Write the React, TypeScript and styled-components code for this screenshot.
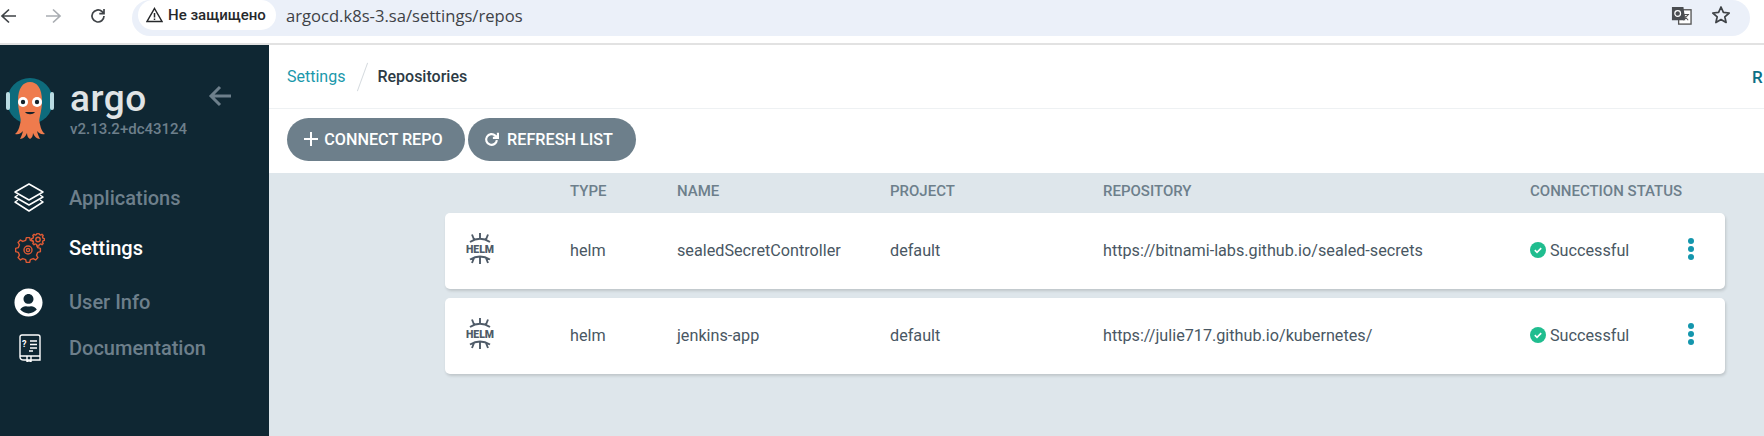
import React from "react";
import styled, { createGlobalStyle } from "styled-components";
import { FaUserCircle } from "react-icons/fa";

const Global = createGlobalStyle`
  html, body { margin: 0; padding: 0; background: #fff; }
  body { font-family: Roboto, "Liberation Sans", sans-serif; width: 1764px; height: 436px; overflow: hidden; }
  * { box-sizing: border-box; }
`;

const Page = styled.div`
  width: 1764px;
  height: 436px;
  display: flex;
  flex-direction: column;
  overflow: hidden;
`;

const BrowserBar = styled.header`
  height: 45px;
  flex: none;
  display: flex;
  align-items: flex-start;
  background: #fff;
  border-bottom: 2px solid #e2e2e2;
  padding-right: 14px;
`;

const NavIcons = styled.div`
  width: 132px;
  height: 36px;
  flex: none;
  display: flex;
  align-items: center;
  padding-bottom: 4px;
  color: #3c4043;
`;

const NavIcon = styled.svg<{ $dim?: boolean; $left: number }>`
  width: 18px;
  height: 18px;
  margin-left: ${(p) => p.$left}px;
  flex: none;
  stroke: ${(p) => (p.$dim ? "#a9adb2" : "#3f4347")};
  fill: none;
  stroke-width: 1.7;
`;

const Omnibox = styled.div`
  flex: 1;
  height: 36px;
  background: #ebf0f9;
  border-radius: 18px;
  display: flex;
  align-items: flex-start;
  padding-left: 6px;
  padding-right: 19px;
`;

const SecurityChip = styled.div`
  width: 138px;
  height: 30px;
  background: #fff;
  border-radius: 15px;
  display: flex;
  align-items: center;
  gap: 5px;
  padding-left: 8px;
  font-size: 15px;
  font-weight: 500;
  color: #26282b;
  white-space: nowrap;
`;

const UrlText = styled.span`
  margin-left: 10px;
  font-family: "Open Sans", Roboto, sans-serif;
  font-size: 16.6px;
  line-height: 32px;
  color: #3e4247;
  flex: 1;
`;

const OmniIcons = styled.div`
  display: flex;
  align-items: center;
  gap: 19px;
  height: 30px;
`;

const Body = styled.div`
  flex: 1;
  display: flex;
  min-height: 0;
`;

const Sidebar = styled.aside`
  width: 269px;
  flex: none;
  background: #0f2733;
  display: flex;
  flex-direction: column;
`;

const Brand = styled.div`
  height: 127px;
  display: flex;
  padding: 33px 0 0 5px;
  flex: none;
`;

const LogoMark = styled.svg`
  width: 50px;
  height: 66px;
  margin-top: -2px;
  flex: none;
`;

const BrandText = styled.div`
  margin-left: 15px;
  padding-top: 6px;
  display: flex;
  flex-direction: column;
`;

const Wordmark = styled.span`
  font-family: Roboto, sans-serif;
  font-size: 37px;
  font-weight: 500;
  line-height: 30px;
  color: #e0e4e6;
  letter-spacing: 0.5px;
  height: 37px;
`;

const Version = styled.span`
  font-size: 15px;
  font-weight: 500;
  line-height: 16px;
  color: #6d7f8b;
`;

const Collapse = styled.svg`
  width: 24px;
  height: 22px;
  margin: 7px 0 0 21px;
  stroke: #6d7f8b;
  fill: none;
  stroke-width: 3;
`;

const Menu = styled.nav`
  display: flex;
  flex-direction: column;
`;

const MenuItem = styled.div<{ $active?: boolean; $h: number }>`
  height: ${(p) => p.$h}px;
  display: flex;
  align-items: center;
  font-size: 20px;
  font-weight: 500;
  color: ${(p) => (p.$active ? "#fff" : "#6d7f8b")};
`;

const MenuIconSlot = styled.span<{ $inset?: number }>`
  width: 69px;
  padding-left: ${(p) => p.$inset ?? 13}px;
  display: flex;
  align-items: center;
  flex: none;
  color: #fff;
`;

const Main = styled.main`
  flex: 1;
  display: flex;
  flex-direction: column;
  min-width: 0;
`;

const TopBar = styled.div`
  height: 64px;
  flex: none;
  display: flex;
  align-items: center;
  padding-left: 18px;
  border-bottom: 1px solid #eef1f3;
  background: #fff;
  font-size: 16px;
`;

const CrumbLink = styled.span`
  color: #1a98ab;
`;

const CrumbSlash = styled.span`
  width: 1px;
  height: 30px;
  background: #d5dade;
  transform: rotate(20deg);
  margin: 0 14px 0 17px;
`;

const CrumbCurrent = styled.span`
  color: #2c3a44;
  font-weight: 500;
  flex: 1;
`;

const RightCut = styled.span`
  color: #0b6f86;
  font-weight: 500;
  font-size: 17px;
  width: 12px;
  overflow: hidden;
`;

const ActionBar = styled.div`
  height: 64px;
  flex: none;
  display: flex;
  align-items: center;
  gap: 3px;
  padding: 0 0 4px 18px;
  background: #fff;
`;

const ActionButton = styled.div<{ $w: number; $gap: number }>`
  width: ${(p) => p.$w}px;
  height: 43px;
  border-radius: 22px;
  background: #6d7f8b;
  color: #fff;
  font-size: 16.2px;
  font-weight: 500;
  display: flex;
  align-items: center;
  justify-content: center;
  gap: ${(p) => p.$gap}px;
  padding-right: ${(p) => p.$gap - 1}px;
  white-space: nowrap;
`;

const Content = styled.div`
  flex: 1;
  background: #dee6eb;
  padding: 0 39px 0 176px;
`;

const Columns = "125px 107px 213px 213px 427px 1fr 60px";

const HeadRow = styled.div`
  height: 40px;
  display: grid;
  grid-template-columns: ${Columns};
  align-items: center;
  font-size: 15px;
  font-weight: 500;
  color: #6d7f8b;
  padding-bottom: 5px;
  white-space: nowrap;
`;

const Rows = styled.div`
  display: flex;
  flex-direction: column;
  gap: 9px;
`;

const Row = styled.div`
  height: 76px;
  display: grid;
  grid-template-columns: ${Columns};
  align-items: center;
  background: #fff;
  border-radius: 5px;
  box-shadow: 1px 2px 3px rgba(0, 0, 0, 0.14);
  font-size: 16.2px;
  color: #495763;
  padding-bottom: 2px;
  white-space: nowrap;
`;

const HelmSlot = styled.div`
  padding-left: 21px;
  margin-top: -1px;
  display: flex;
`;

const Status = styled.div`
  display: flex;
  align-items: center;
  gap: 4px;
`;

const Kebab = styled.div`
  display: flex;
  flex-direction: column;
  gap: 2px;
  padding-left: 23px;
  margin-top: -3px;
`;

const Dot = styled.span`
  width: 6px;
  height: 6px;
  border-radius: 50%;
  background: #1496ad;
`;

const ArgoLogo = () => (
  <LogoMark viewBox="0 0 50 64">
    <circle cx="25" cy="24" r="23" fill="#0e6b7c" />
    <rect x="1" y="15" width="4" height="18" rx="2" fill="#b9dbe2" />
    <rect x="45" y="15" width="4" height="18" rx="2" fill="#b9dbe2" />
    <path d="M13 24C13 11 18 5 25 5s12 6 12 19c0 8-2 14-3 20H16c-1-6-3-12-3-20z" fill="#ef7b4d" />
    <path d="M16 42c-1 6-2 12-6 15 4 1 6-1 8-3-1 4-2 6-3 8 3 0 6-3 7-6 0 3 1 5 3 6 2-1 3-3 3-6 1 3 4 6 7 6-1-2-2-4-3-8 2 2 4 4 8 3-4-3-5-9-6-15z" fill="#ef7b4d" />
    <circle cx="18" cy="25" r="5" fill="#fff" />
    <circle cx="32" cy="25" r="5" fill="#fff" />
    <circle cx="18" cy="25" r="2.2" fill="#14222b" />
    <circle cx="32" cy="25" r="2.2" fill="#14222b" />
    <path d="M20 35c2 3 8 3 10 0z" fill="#14222b" />
  </LogoMark>
);

const HelmIcon = () => (
  <svg width="28" height="33" viewBox="0 0 28 33" fill="none" stroke="#4f5b68" strokeWidth="1.9">
    <path d="M14 0v6M6 1.5L8 6.5M22 1.5L20 6.5M4 9Q14 2.5 24 9" />
    <path d="M14 23v8M6 30L8 25M22 30L20 25M4 26.5Q14 20.5 24 26.5" />
    <text x="14" y="19.5" textAnchor="middle" textLength="28" fontFamily="Roboto, sans-serif" fontWeight="900" fontSize="10.5" fill="#4f5b68" stroke="none">HELM</text>
  </svg>
);

const Layers = () => (
  <svg width="32" height="32" viewBox="0 0 32 32" fill="none" stroke="#fff" strokeWidth="1.5" strokeLinejoin="round">
    <path d="M16 2L30 10 16 18 2 10z" />
    <path d="M5 13L2 15l14 8 14-8-3-2" />
    <path d="M5 18L2 20l14 9 14-9-3-2" />
  </svg>
);

const gearPath = (cx: number, cy: number, r: number, teeth: number) => {
  let d = "";
  for (let i = 0; i < teeth; i++) {
    const step = (Math.PI * 2) / teeth;
    const a = i * step;
    const pts = [
      [a - step * 0.3, r * 0.8],
      [a - step * 0.17, r],
      [a + step * 0.17, r],
      [a + step * 0.3, r * 0.8],
    ];
    pts.forEach(([t, rad], j) => {
      d += `${i === 0 && j === 0 ? "M" : "L"}${(cx + Math.cos(t) * rad).toFixed(2)} ${(cy + Math.sin(t) * rad).toFixed(2)}`;
    });
  }
  return d + "Z";
};

const Gears = () => (
  <svg width="30" height="30" viewBox="0 0 30 30" fill="none" stroke="#de5a35" strokeWidth="1.4" strokeLinejoin="round">
    <path d={gearPath(13, 17, 12.5, 8)} />
    <circle cx="13" cy="17" r="4" />
    <circle cx="13" cy="17" r="1.6" />
    <path d={gearPath(23, 6.5, 6.5, 8)} fill="#0f2733" />
    <circle cx="23" cy="6.5" r="2.2" />
  </svg>
);

const DocBook = () => (
  <svg width="22" height="28" viewBox="0 0 22 28" fill="none" stroke="#fff" strokeWidth="1.4">
    <path d="M3 1h16a2 2 0 0 1 2 2v23H5c-2 0-4-1-4-3V3a2 2 0 0 1 2-2z" />
    <path d="M1 22h20M8 22v6l2-1.5 2 1.5v-6" />
    <path d="M11 7h7M11 10.5h7M11 14h7M10 17h4" />
    <text x="3" y="13" fontFamily="Roboto, sans-serif" fontSize="9" fontWeight="700" fill="#fff" stroke="none">?</text>
  </svg>
);

const CheckBadge = () => (
  <svg width="16" height="16" viewBox="0 0 16 16">
    <circle cx="8" cy="8" r="8" fill="#20bd8f" />
    <path d="M4.8 8.2l2.2 2.1 4.2-4.2" fill="none" stroke="#fff" strokeWidth="1.6" />
  </svg>
);

const repos = [
  { name: "sealedSecretController", url: "https://bitnami-labs.github.io/sealed-secrets" },
  { name: "jenkins-app", url: "https://julie717.github.io/kubernetes/" },
];

export default function App() {
  return (
    <Page>
      <Global />
      <BrowserBar>
        <NavIcons>
          <NavIcon $left={0} viewBox="0 0 18 18"><path d="M16 9H2M9 2.5L2 9l7 6.5" /></NavIcon>
          <NavIcon $left={26} $dim viewBox="0 0 18 18"><path d="M2 9h14M9 2.5L16 9l-7 6.5" /></NavIcon>
          <NavIcon $left={27} viewBox="0 0 18 18"><path d="M15 9a6 6 0 1 1-2-4.5L15 6.5M15 2v4.7h-4.7" /></NavIcon>
        </NavIcons>
        <Omnibox>
          <SecurityChip>
            <svg width="17" height="16" viewBox="0 0 17 16" fill="none" stroke="#26282b" strokeWidth="1.5">
              <path d="M8.5 1.5L16 14.5H1z" />
              <path d="M8.5 6v4.5M8.5 11.5v1.5" />
            </svg>
            Не защищено
          </SecurityChip>
          <UrlText>argocd.k8s-3.sa/settings/repos</UrlText>
          <OmniIcons>
            <svg width="21" height="21" viewBox="0 0 22 22">
              <rect x="8" y="5" width="13" height="15" fill="#fff" stroke="#555" strokeWidth="1.4" />
              <path d="M1 2h12l2 14H1z" fill="#4a4d51" />
              <path d="M13 10l5 6M18 10l-5 6M12 10h7" stroke="#555" strokeWidth="1.1" fill="none" />
              <circle cx="7" cy="9" r="3" fill="none" stroke="#fff" strokeWidth="1.3" />
            </svg>
            <svg width="20" height="20" viewBox="0 0 20 20" fill="none" stroke="#3f4347" strokeWidth="1.7" strokeLinejoin="round">
              <path d="M10 2l2.4 5.4 5.8.6-4.4 3.8 1.3 5.7-5.1-3-5.1 3 1.3-5.7L1.8 8l5.8-.6z" />
            </svg>
          </OmniIcons>
        </Omnibox>
      </BrowserBar>
      <Body>
        <Sidebar>
          <Brand>
            <ArgoLogo />
            <BrandText>
              <Wordmark>argo</Wordmark>
              <Version>v2.13.2+dc43124</Version>
            </BrandText>
            <Collapse viewBox="0 0 24 22"><path d="M23 11H3M12 2l-9 9 9 9" /></Collapse>
          </Brand>
          <Menu>
            <MenuItem $h={52}><MenuIconSlot><Layers /></MenuIconSlot>Applications</MenuItem>
            <MenuItem $h={48} $active><MenuIconSlot $inset={15}><Gears /></MenuIconSlot>Settings</MenuItem>
            <MenuItem $h={60}><MenuIconSlot $inset={14}><FaUserCircle size={29} /></MenuIconSlot>User Info</MenuItem>
            <MenuItem $h={32}><MenuIconSlot $inset={19}><DocBook /></MenuIconSlot>Documentation</MenuItem>
          </Menu>
        </Sidebar>
        <Main>
          <TopBar>
            <CrumbLink>Settings</CrumbLink>
            <CrumbSlash />
            <CrumbCurrent>Repositories</CrumbCurrent>
            <RightCut>R</RightCut>
          </TopBar>
          <ActionBar>
            <ActionButton $w={178} $gap={6}>
              <svg width="14" height="14" viewBox="0 0 14 14" stroke="#fff" strokeWidth="2"><path d="M7 0v14M0 7h14" /></svg>
              CONNECT REPO
            </ActionButton>
            <ActionButton $w={168} $gap={8}>
              <svg width="15" height="15" viewBox="0 0 14 14" fill="none" stroke="#fff" strokeWidth="2"><path d="M12 7.5A5 5 0 1 1 10.5 3.4L12.5 5M13 .8v4.7H8.3" /></svg>
              REFRESH LIST
            </ActionButton>
          </ActionBar>
          <Content>
            <HeadRow>
              <span />
              <span>TYPE</span>
              <span>NAME</span>
              <span>PROJECT</span>
              <span>REPOSITORY</span>
              <span>CONNECTION STATUS</span>
              <span />
            </HeadRow>
            <Rows>
              {repos.map((r) => (
                <Row key={r.name}>
                  <HelmSlot><HelmIcon /></HelmSlot>
                  <span>helm</span>
                  <span>{r.name}</span>
                  <span>default</span>
                  <span>{r.url}</span>
                  <Status><CheckBadge />Successful</Status>
                  <Kebab><Dot /><Dot /><Dot /></Kebab>
                </Row>
              ))}
            </Rows>
          </Content>
        </Main>
      </Body>
    </Page>
  );
}
